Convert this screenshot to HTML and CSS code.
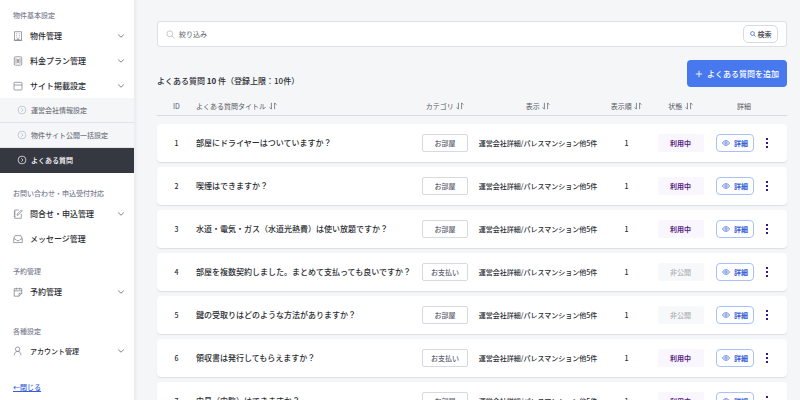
FILE: index.html
```html
<!DOCTYPE html>
<html lang="ja">
<head>
  <meta charset="UTF-8" />
  <meta name="viewport" content="width=device-width, initial-scale=1" />
  <title>よくある質問</title>
  <link rel="stylesheet" href="styles.css">
</head>
<body>

  <!-- アイコン -->
  <svg class="sprite" aria-hidden="true">
    <symbol id="chevron" viewBox="0 0 8 8"><path d="M1.2 2.6 4 5.2l2.8-2.6" /></symbol>
    <symbol id="circle" viewBox="0 0 10 10"><circle cx="5" cy="5" r="3.9" /><path d="M4.3 3.3 6 5 4.3 6.7" /></symbol>
    <symbol id="search" viewBox="0 0 10 10"><circle cx="4.2" cy="4.2" r="3.2" /><path d="m6.6 6.6 2.7 2.7" /></symbol>
    <symbol id="sort" viewBox="0 0 8 8"><path d="M2.4.8v6.3M.6 5.3l1.8 1.9M5.6 7.2V.9M5.6.9l1.8 1.8" /></symbol>
    <symbol id="eye" viewBox="0 0 8 8"><path d="M.5 4C1.3 2.4 2.6 1.7 4 1.7S6.7 2.4 7.5 4C6.7 5.6 5.4 6.3 4 6.3S1.3 5.6.5 4z" /><circle cx="4" cy="4" r="1.2" /></symbol>
    <symbol id="dots" viewBox="0 0 4 12"><path d="M1 1h2v2H1zM1 5h2v2H1zM1 9h2v2H1z" /></symbol>
  </svg>

  <div class="layout">
    <nav class="sidebar">
      <section class="menu">
        <h2>物件基本設定</h2>
        <a href="#" class="item">
          <svg class="icon" viewBox="0 0 10 10"><path d="M1.5.7h7v8.6h-7zM.8 9.3h8.4M3.4 2.6h.8M5.8 2.6h.8M3.4 4.4h.8M5.8 4.4h.8M3.4 6.2h.8M5.8 6.2h.8M4.2 9.2V7.8h1.6v1.4" /></svg>
          物件管理
          <svg class="chevron"><use href="#chevron" /></svg>
        </a>
        <a href="#" class="item">
          <svg class="icon" viewBox="0 0 10 10"><rect x="1.3" y=".8" width="7.4" height="8.4" rx="1" /><path d="M3 2.2v5.6M7 2.2v5.6M4 3l1 1.5L6 3M4 4.8h2M4 6h2M5 4.5v2.8" /></svg>
          料金プラン管理
          <svg class="chevron"><use href="#chevron" /></svg>
        </a>
        <a href="#" class="item">
          <svg class="icon" viewBox="0 0 10 10"><rect x="1" y="1.3" width="8" height="7.7" rx=".8" /><path d="M1 4h8" /></svg>
          サイト掲載設定
          <svg class="chevron"><use href="#chevron" /></svg>
        </a>
        <a href="#" class="subitem"><svg class="icon"><use href="#circle" /></svg>運営会社情報設定</a>
        <a href="#" class="subitem"><svg class="icon"><use href="#circle" /></svg>物件サイト公開一括設定</a>
        <a href="#" class="subitem active"><svg class="icon"><use href="#circle" /></svg>よくある質問</a>
      </section>

      <section class="menu">
        <h2>お問い合わせ・申込受付対応</h2>
        <a href="#" class="item">
          <svg class="icon" viewBox="0 0 10 10"><path d="M5.8 1H1.7v8.3h6.6V5M.7 3h1.8M.7 5.1h1.8M.7 7.2h1.8M8.3.9l1 1-3.9 4-1.4.4.4-1.4z" /></svg>
          問合せ・申込管理
          <svg class="chevron"><use href="#chevron" /></svg>
        </a>
        <a href="#" class="item">
          <svg class="icon" viewBox="0 0 10 10"><path d="M.7 5 2.2 1.6h5.6L9.3 5v3.6H.7zM.7 4.6l2.6 1.2c.4 1.3 3 1.3 3.4 0l2.6-1.2" /></svg>
          メッセージ管理
        </a>
      </section>

      <section class="menu">
        <h2>予約管理</h2>
        <a href="#" class="item">
          <svg class="icon" viewBox="0 0 10 10"><path d="M8.8 6.4V1.7H1.2v7.5H6zM6 9.2V6.4h2.8M1.2 3.8h7.6M3.3.6v2M6.7.6v2" /></svg>
          予約管理
          <svg class="chevron"><use href="#chevron" /></svg>
        </a>
      </section>

      <section class="menu settings">
        <h2>各種設定</h2>
        <a href="#" class="item small">
          <svg class="icon" viewBox="0 0 10 10"><circle cx="4.6" cy="3.2" r="2.2" /><path d="M1.2 9.2c0-2.2 1.3-3.8 3.4-3.8S8 7 8 9.2" /></svg>
          アカウント管理
          <svg class="chevron"><use href="#chevron" /></svg>
        </a>
      </section>

      <a href="#" class="close">←閉じる</a>
    </nav>

    <main class="content">
      <form class="search">
        <svg class="search-icon"><use href="#search" /></svg>
        <input type="text" placeholder="絞り込み" aria-label="絞り込み">
        <button type="button" class="search-btn"><svg><use href="#search" /></svg>検索</button>
      </form>

      <div class="heading">
        <h1>よくある質問 <b>10</b> 件（登録上限：10件）</h1>
        <button type="button" class="add">
          <svg viewBox="0 0 8 8"><path d="M4 .8v6.4M.8 4h6.4" /></svg>よくある質問を追加
        </button>
      </div>

      <table>
        <thead>
          <tr>
            <th>ID</th>
            <th class="title">よくある質問タイトル <svg><use href="#sort" /></svg></th>
            <th>カテゴリ <svg><use href="#sort" /></svg></th>
            <th>表示 <svg><use href="#sort" /></svg></th>
            <th>表示順 <svg><use href="#sort" /></svg></th>
            <th>状態 <svg><use href="#sort" /></svg></th>
            <th class="actions" colspan="2">詳細</th>
          </tr>
        </thead>
        <tbody id="faqList"></tbody>
      </table>
    </main>
  </div>

  <script src="script.js"></script>
</body>
</html>
```
FILE: styles.css
```css
* {
  box-sizing: border-box;
}

body {
  margin: 0;
  font-family: "Noto Sans CJK JP", sans-serif;
  font-size: 8px;
  line-height: 12px;
  color: #2b2d33;
  background: #f5f6f8;
}

svg {
  flex: none;
  fill: none;
  stroke: currentColor;
  stroke-width: 0.7;
}

.sprite {
  display: none;
}

a {
  color: inherit;
  text-decoration: none;
}

button {
  display: inline-flex;
  align-items: center;
  justify-content: center;
  padding: 0;
  font-family: inherit;
  cursor: pointer;
}

.layout {
  display: flex;
  height: 100vh;
  overflow: hidden;
}

/* サイドバー */
.sidebar {
  flex: none;
  width: 135px;
  padding-top: 10px;
  background: #fff;
  border-right: 1px solid #eceef1;
  box-shadow: 1px 0 2px rgba(40, 50, 70, 0.06);
}

.menu {
  margin-bottom: 15px;
}

.menu.settings {
  padding-top: 7px;
}

.menu h2 {
  margin: 0 0 3px 13px;
  font-size: 7px;
  line-height: 10px;
  font-weight: 500;
  color: #7c8092;
}

.item,
.subitem {
  display: flex;
  align-items: center;
  height: 25px;
}

.item {
  gap: 7px;
  padding: 0 9px 0 13px;
  font-weight: 500;
}

.item.small {
  height: 23px;
  font-size: 7px;
}

.icon {
  width: 10px;
  height: 10px;
  color: #757882;
}

.chevron {
  width: 8px;
  height: 8px;
  margin-left: auto;
  color: #4e515b;
}

.subitem {
  gap: 4px;
  padding-left: 17px;
  font-size: 7px;
  font-weight: 500;
  color: #737783;
  background: #f5f6f8;
  border-bottom: 1px solid #e0e3e7;
}

.subitem .icon {
  color: #b4b8c1;
}

.subitem.active,
.subitem.active .icon {
  color: #fff;
}

.subitem.active {
  background: #353741;
  border-bottom-color: #353741;
}

.close {
  margin-left: 13px;
  font-size: 7px;
  font-weight: 500;
  line-height: 20px;
  color: #3560d8;
  text-decoration: underline;
}

/* メイン */
.content {
  flex: 1;
  min-width: 0;
  padding: 21px 13px 0 22px;
}

.search {
  display: flex;
  align-items: center;
  gap: 4px;
  height: 26px;
  padding: 0 8px;
  background: #fff;
  border: 1px solid #dde0e4;
  border-radius: 3px;
}

.search-icon {
  width: 9px;
  height: 9px;
  color: #a5a9b1;
}

.search input {
  flex: 1;
  min-width: 0;
  padding: 0;
  font-family: inherit;
  font-size: 7px;
  border: none;
  outline: none;
  background: none;
}

.search input::placeholder {
  color: #5c606a;
}

.search-btn {
  gap: 2px;
  width: 35px;
  height: 18px;
  font-size: 7px;
  font-weight: 500;
  color: #353844;
  background: #fff;
  border: 1px solid #d5dae6;
  border-radius: 5px;
}

.search-btn svg {
  width: 6px;
  height: 6px;
  color: #3560d8;
  stroke-width: 1.2;
}

.heading {
  display: flex;
  align-items: flex-end;
  justify-content: space-between;
  margin-top: 13px;
}

.heading h1 {
  margin: 0;
  font-size: 8px;
  font-weight: 500;
}

.add {
  gap: 4px;
  height: 27px;
  padding: 0 8px;
  font-size: 8px;
  font-weight: 500;
  color: #fff;
  background: #4878ee;
  border: none;
  border-radius: 4px;
}

.add svg {
  width: 8px;
  height: 8px;
  stroke-width: 0.9;
}

/* 一覧 */
table,
thead {
  display: block;
}

tbody {
  display: flex;
  flex-direction: column;
  gap: 5px;
  margin-top: 8px;
}

tr {
  display: grid;
  grid-template-columns: 39px 1fr 64px 122px 55px 53px 56px 8px;
  align-items: center;
  padding-right: 16px;
}

thead tr {
  height: 29px;
  padding-top: 9px;
  padding-right: 6px;
  grid-template-columns: 39px 1fr 64px 122px 55px 53px 74px;
  border-bottom: 1px solid #d9dce0;
}

tbody tr {
  height: 38px;
  background: #fff;
  border-radius: 4px;
  box-shadow: 0 1px 1px rgba(40, 50, 70, 0.12);
}

th,
td {
  padding: 0;
  font-size: 7px;
  font-weight: 500;
  text-align: center;
  white-space: nowrap;
}

th {
  font-weight: 400;
  color: #555963;
}

th svg {
  width: 8px;
  height: 8px;
  margin-left: 1px;
  vertical-align: -1px;
}

.title {
  text-align: left;
}

td.title {
  font-size: 8px;
}

.category,
.status {
  display: inline-block;
  width: 46px;
  line-height: 16px;
  border-radius: 2px;
  vertical-align: middle;
}

.category {
  color: #5d6172;
  background: #fff;
  border: 1px solid #d6d9df;
}

.status {
  line-height: 18px;
  color: #5b2483;
  font-weight: 700;
  background: #f9f6fd;
}

.status.private {
  color: #aeb1b6;
  font-weight: 500;
  background: #f7f8f9;
}

.detail {
  gap: 4px;
  width: 38px;
  height: 18px;
  font-size: 7px;
  font-weight: 700;
  color: #3560d8;
  vertical-align: middle;
  background: #fff;
  border: 1px solid #a9c2f3;
  border-radius: 4px;
}

.detail svg {
  width: 8px;
  height: 8px;
}

.more {
  width: 8px;
  height: 14px;
  color: #2b1c87;
  vertical-align: middle;
  background: none;
  border: none;
}

.more svg {
  width: 4px;
  height: 12px;
  fill: currentColor;
  stroke: none;
}
```
FILE: script.js
```js
const faqs = [
  { title: '部屋にドライヤーはついていますか？', category: 'お部屋', open: true },
  { title: '喫煙はできますか？', category: 'お部屋', open: true },
  { title: '水道・電気・ガス（水道光熱費）は使い放題ですか？', category: 'お部屋', open: true },
  { title: '部屋を複数契約しました。まとめて支払っても良いですか？', category: 'お支払い', open: false },
  { title: '鍵の受取りはどのような方法がありますか？', category: 'お部屋', open: false },
  { title: '領収書は発行してもらえますか？', category: 'お支払い', open: true },
  { title: '内見（内覧）はできますか？', category: 'お部屋', open: true }
];

const faqList = document.getElementById('faqList');

// 一覧の描画
faqs.forEach(({ title, category, open }, i) => {
  const row = document.createElement('tr');
  row.innerHTML = `
    <td>${i + 1}</td>
    <td class="title">${title}</td>
    <td><span class="category">${category}</span></td>
    <td>運営会社詳細/パレスマンション他5件</td>
    <td>1</td>
    <td><span class="status${open ? '' : ' private'}">${open ? '利用中' : '非公開'}</span></td>
    <td><button type="button" class="detail"><svg><use href="#eye" /></svg>詳細</button></td>
    <td><button type="button" class="more" aria-label="メニュー"><svg><use href="#dots" /></svg></button></td>
  `;
  faqList.appendChild(row);
});
```
